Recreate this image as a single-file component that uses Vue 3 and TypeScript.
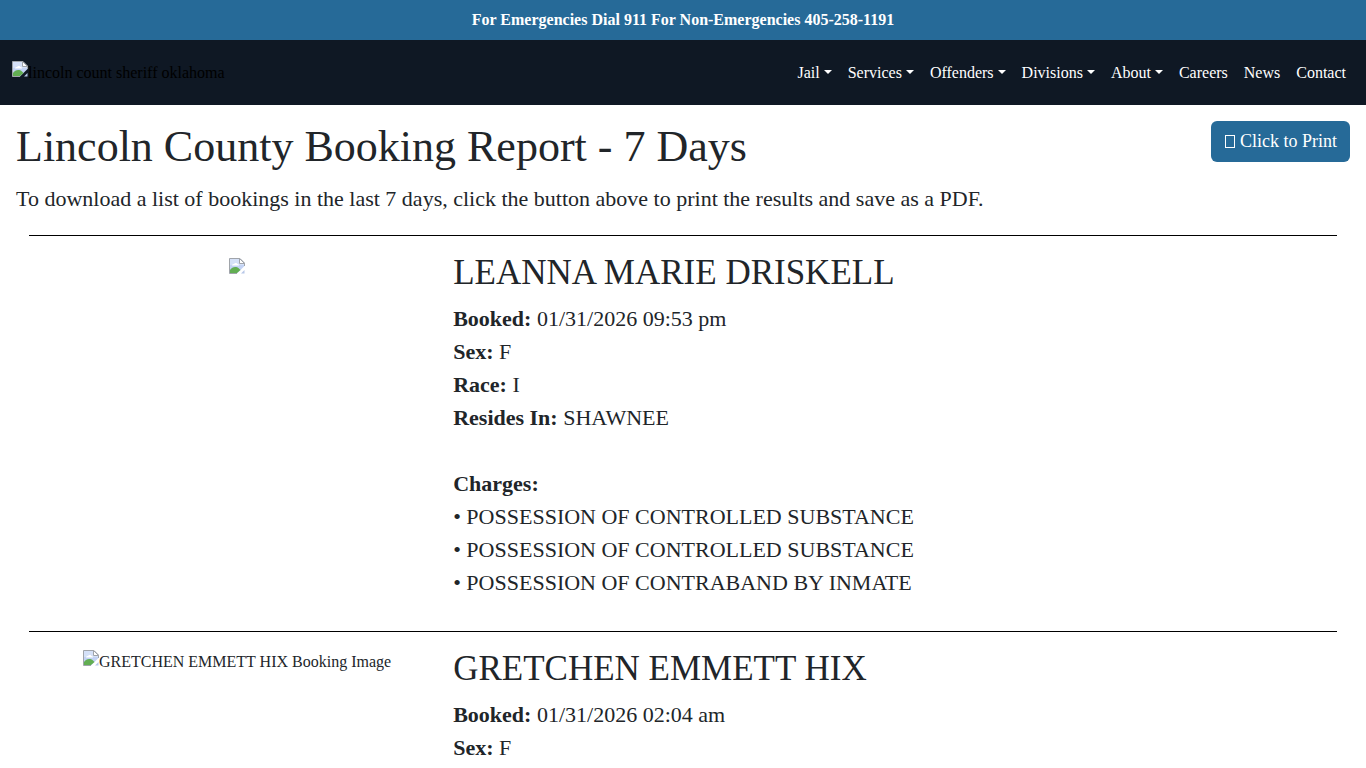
<script setup lang="ts">
interface Booking {
  name: string
  alt: string
  facts: { label: string; value: string }[]
  charges: string[]
}

const menu: { label: string; dropdown: boolean }[] = [
  { label: 'Jail', dropdown: true },
  { label: 'Services', dropdown: true },
  { label: 'Offenders', dropdown: true },
  { label: 'Divisions', dropdown: true },
  { label: 'About', dropdown: true },
  { label: 'Careers', dropdown: false },
  { label: 'News', dropdown: false },
  { label: 'Contact', dropdown: false },
]

const bookings: Booking[] = [
  {
    name: 'LEANNA MARIE DRISKELL',
    alt: '',
    facts: [
      { label: 'Booked:', value: '01/31/2026 09:53 pm' },
      { label: 'Sex:', value: 'F' },
      { label: 'Race:', value: 'I' },
      { label: 'Resides In:', value: 'SHAWNEE' },
    ],
    charges: [
      'POSSESSION OF CONTROLLED SUBSTANCE',
      'POSSESSION OF CONTROLLED SUBSTANCE',
      'POSSESSION OF CONTRABAND BY INMATE',
    ],
  },
  {
    name: 'GRETCHEN EMMETT HIX',
    alt: 'GRETCHEN EMMETT HIX Booking Image',
    facts: [
      { label: 'Booked:', value: '01/31/2026 02:04 am' },
      { label: 'Sex:', value: 'F' },
    ],
    charges: [],
  },
]

const printPage = () => window.print()
</script>

<template>
  <div class="page">
    <svg class="defs" width="0" height="0" aria-hidden="true">
      <symbol id="photo" viewBox="0 0 16 16">
        <path d="M.5 .5H11L15.500 5V8L8 15.500H.5Z" fill="#c3d3f4" />
        <path d="M1 1H11V5H15V7H1Z" fill="#d5e1f8" />
        <path d="M3 7.500C3 6.500 4 6 5 6C5.500 4.500 8 4.500 8.500 6C9.500 6 10 7 10 7.500Z" fill="#fff" />
        <path d="M1 15V12C3 9 7 8 10 10.500L11.500 12L8 15Z" fill="#62ae52" />
        <path d="M15.500 12V15.500H12Z" fill="#b7c7e8" />
        <path d="M.5 15.500V.5H11L15.500 5V8M.5 15.500H8" fill="none" stroke="#a0a4aa" />
        <path d="M10.500 .5V5.500H15.500Z" fill="#fff" stroke="#a0a4aa" />
      </symbol>
    </svg>

    <div class="alert">For Emergencies Dial 911 For Non-Emergencies 405-258-1191</div>

    <header class="bar">
      <a class="brand" href="#">
        <svg class="photo"><use href="#photo" /></svg>
        <span>lincoln count sheriff oklahoma</span>
      </a>
      <nav class="menu" aria-label="Main">
        <a v-for="item in menu" :key="item.label" href="#" :class="{ dropdown: item.dropdown }">{{ item.label }}</a>
      </nav>
    </header>

    <main>
      <div class="top">
        <h1>Lincoln County Booking Report - 7 Days</h1>
        <button type="button" @click="printPage">
          <svg width="11" height="13" viewBox="0 0 11 13" aria-hidden="true">
            <rect x="1.500" y=".5" width="9" height="12" fill="none" stroke="currentColor" />
          </svg>
          Click to Print
        </button>
      </div>
      <p class="intro">To download a list of bookings in the last 7 days, click the button above to print the results and save as a PDF.</p>

      <section v-for="b in bookings" :key="b.name" class="booking">
        <div class="picture" :class="{ bare: !b.alt }">
          <svg class="photo"><use href="#photo" /></svg>
          <span v-if="b.alt">{{ b.alt }}</span>
        </div>
        <div class="details">
          <h2>{{ b.name }}</h2>
          <div v-for="f in b.facts" :key="f.label"><strong>{{ f.label }}</strong> {{ f.value }}</div>
          <div v-if="b.charges.length" class="charges">
            <strong>Charges:</strong>
            <div v-for="(c, i) in b.charges" :key="i">• {{ c }}</div>
          </div>
        </div>
      </section>
    </main>
  </div>
</template>

<style>
body {
  margin: 0;
  background: #fff;
}
</style>

<style scoped>
.page {
  font-family: "Liberation Serif", "Times New Roman", serif;
  font-size: 16px;
  line-height: 24px;
  color: #212529;
}
.defs {
  display: block;
}
.alert {
  padding: 8px;
  background: #266a98;
  color: #fff;
  font-weight: bold;
  text-align: center;
}
.bar {
  display: flex;
  align-items: center;
  justify-content: space-between;
  min-height: 65px;
  padding: 0 12px;
  box-sizing: border-box;
  background: #0f1824;
}
.brand {
  display: flex;
  color: #000;
  text-decoration: none;
}
.photo {
  width: 16px;
  height: 16px;
  flex: none;
}
.menu {
  display: flex;
}
.menu a {
  padding: 8px;
  color: #fff;
  text-decoration: none;
}
.dropdown::after {
  content: "";
  display: inline-block;
  margin-left: 4px;
  vertical-align: 4px;
  border-top: 4px solid;
  border-left: 4px solid transparent;
  border-right: 4px solid transparent;
}
main {
  padding: 16px;
}
.top {
  display: flex;
  justify-content: space-between;
  align-items: flex-start;
  margin-bottom: 9px;
}
h1 {
  margin: 0;
  font-size: 44px;
  line-height: 52px;
  font-weight: 400;
}
button {
  display: flex;
  align-items: center;
  gap: 5px;
  padding: 7px 13px;
  border: 0;
  border-radius: 6px;
  background: #266a98;
  color: #fff;
  font-family: inherit;
  font-size: 18px;
  line-height: 27px;
  white-space: nowrap;
  cursor: pointer;
}
.intro {
  margin: 0 0 20px;
  font-size: 22px;
  line-height: 33px;
}
.booking {
  display: grid;
  grid-template-columns: 7fr 15fr;
  margin: 0 13px;
  padding: 16px 0 32px;
  border-top: 1px solid #000;
}
.picture {
  display: flex;
  justify-content: center;
  padding-top: 2px;
}
.picture.bare {
  padding-top: 6px;
}
.details {
  padding-left: 8px;
  font-size: 22px;
  line-height: 33px;
}
h2 {
  margin: 0 0 8px;
  font-size: 35px;
  line-height: 42px;
  font-weight: 400;
}
.charges {
  margin-top: 33px;
}
</style>
